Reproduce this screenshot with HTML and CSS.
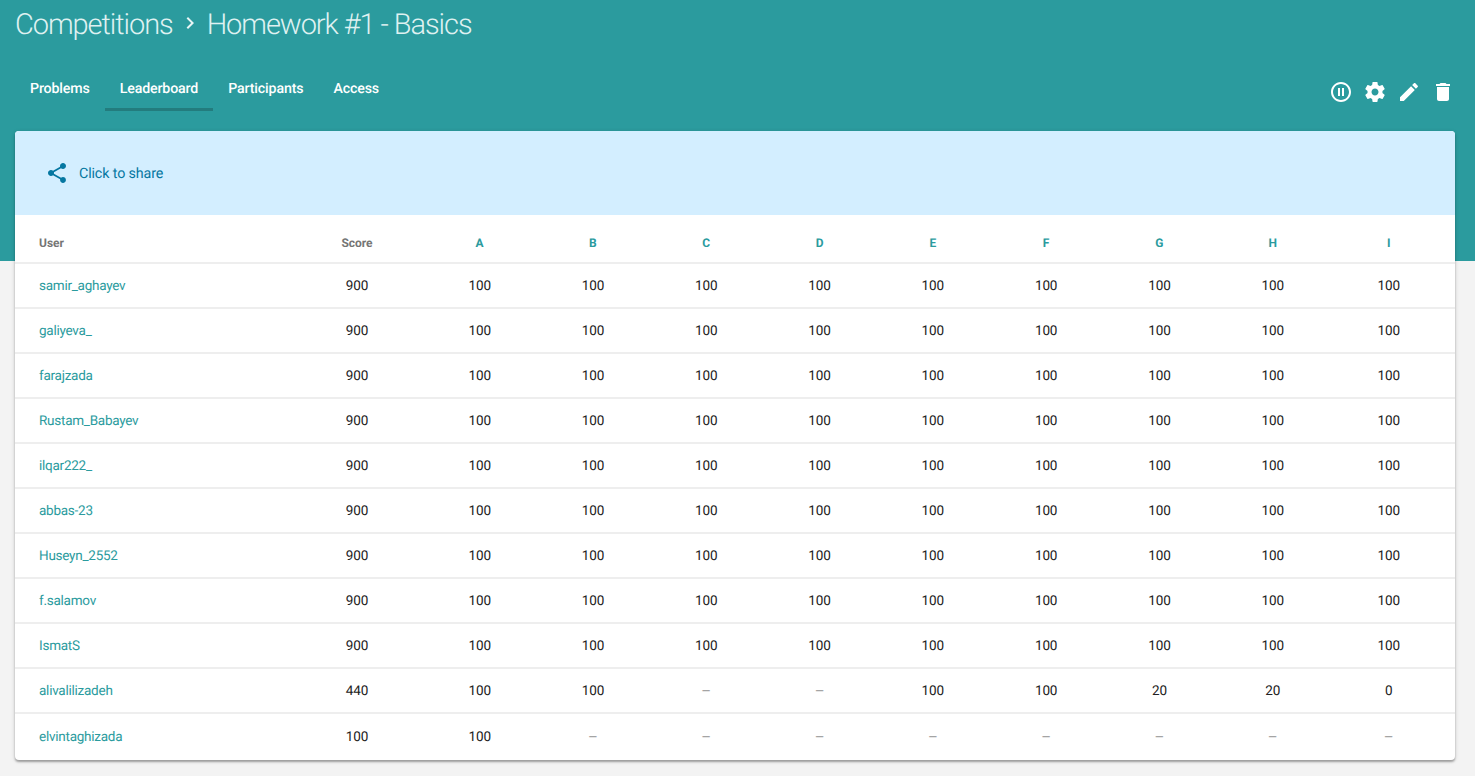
FILE: index.html
```html
<!DOCTYPE html>
<html lang="en">
<head>
<meta charset="utf-8">
<title>Homework #1 - Basics</title>
<link rel="stylesheet" href="styles.css">
</head>
<body>
<header class="page-head">
  <h1 class="crumbs">
    <a class="crumb" href="#">Competitions</a>
    <svg class="chevron" viewBox="0 0 24 24"><path d="M8.59 16.59 13.17 12 8.59 7.41 10 6l6 6-6 6z"/></svg>
    <span class="crumb current">Homework #1 - Basics</span>
  </h1>
  <div class="toolbar">
    <nav class="tabs">
      <a class="tab" href="#">Problems</a>
      <a class="tab active" href="#">Leaderboard</a>
      <a class="tab" href="#">Participants</a>
      <a class="tab" href="#">Access</a>
    </nav>
    <div class="actions">
      <svg viewBox="0 0 24 24"><path d="M9 16h2V8H9v8zm3-14C6.480 2 2 6.480 2 12s4.480 10 10 10 10-4.480 10-10S17.520 2 12 2zm0 18c-4.410 0-8-3.590-8-8s3.590-8 8-8 8 3.590 8 8-3.590 8-8 8zm1-4h2V8h-2v8z"/></svg>
      <svg viewBox="0 0 24 24"><path d="M19.430 12.980c.04-.32.07-.64.07-.98s-.03-.66-.07-.98l2.110-1.650c.19-.15.24-.42.12-.64l-2-3.460c-.12-.22-.39-.3-.61-.22l-2.490 1c-.52-.4-1.080-.73-1.690-.98l-.38-2.650C14.460 2.180 14.250 2 14 2h-4c-.25 0-.46.18-.49.42l-.38 2.650c-.61.25-1.170.59-1.690.98l-2.490-1c-.23-.09-.49 0-.61.22l-2 3.460c-.13.22-.07.49.12.64l2.110 1.650c-.04.32-.07.65-.07.98s.03.66.07.98l-2.110 1.650c-.19.15-.24.42-.12.64l2 3.460c.12.22.39.3.61.22l2.490-1c.52.4 1.080.73 1.690.98l.38 2.650c.03.24.24.42.49.42h4c.25 0 .46-.18.49-.42l.38-2.650c.61-.25 1.170-.59 1.690-.98l2.490 1c.23.09.49 0 .61-.22l2-3.460c.12-.22.07-.49-.12-.64l-2.110-1.650zM12 15.500c-1.930 0-3.500-1.570-3.500-3.500s1.570-3.500 3.500-3.500 3.500 1.570 3.500 3.500-1.570 3.500-3.500 3.500z"/></svg>
      <svg viewBox="0 0 24 24"><path d="M3 17.250V21h3.750L17.810 9.940l-3.750-3.750L3 17.250zM20.710 7.040c.39-.39.39-1.020 0-1.410l-2.340-2.340c-.39-.39-1.020-.39-1.410 0l-1.830 1.830 3.750 3.750 1.830-1.830z"/></svg>
      <svg viewBox="0 0 24 24"><path d="M6 19c0 1.100.9 2 2 2h8c1.100 0 2-.9 2-2V7H6v12zM19 4h-3.500l-1-1h-5l-1 1H5v2h14V4z"/></svg>
    </div>
  </div>
</header>
<main class="card">
  <a class="share" href="#">
    <svg viewBox="0 0 24 24"><path d="M18 16.080c-.76 0-1.440.3-1.960.77L8.910 12.700c.05-.23.09-.46.09-.7s-.04-.47-.09-.7l7.050-4.110c.54.5 1.250.81 2.040.81 1.660 0 3-1.340 3-3s-1.340-3-3-3-3 1.340-3 3c0 .24.04.47.09.7L8.040 9.810C7.500 9.310 6.790 9 6 9c-1.660 0-3 1.340-3 3s1.340 3 3 3c.79 0 1.500-.31 2.040-.81l7.120 4.160c-.05.21-.08.43-.08.65 0 1.610 1.310 2.920 2.920 2.920s2.920-1.310 2.920-2.920-1.310-2.920-2.920-2.920z"/></svg>
    <span>Click to share</span>
  </a>
  <table class="board">
    <colgroup><col class="c-user"><col class="c-score"><col class="c-task" span="8"><col class="c-last"></colgroup>
    <thead>
      <tr><th>User</th><th>Score</th><th><a href="#">A</a></th><th><a href="#">B</a></th><th><a href="#">C</a></th><th><a href="#">D</a></th><th><a href="#">E</a></th><th><a href="#">F</a></th><th><a href="#">G</a></th><th><a href="#">H</a></th><th><a href="#">I</a></th></tr>
    </thead>
    <tbody>
      <tr><td><a href="#">samir_aghayev</a></td><td>900</td><td>100</td><td>100</td><td>100</td><td>100</td><td>100</td><td>100</td><td>100</td><td>100</td><td>100</td></tr>
      <tr><td><a href="#">galiyeva_</a></td><td>900</td><td>100</td><td>100</td><td>100</td><td>100</td><td>100</td><td>100</td><td>100</td><td>100</td><td>100</td></tr>
      <tr><td><a href="#">farajzada</a></td><td>900</td><td>100</td><td>100</td><td>100</td><td>100</td><td>100</td><td>100</td><td>100</td><td>100</td><td>100</td></tr>
      <tr><td><a href="#">Rustam_Babayev</a></td><td>900</td><td>100</td><td>100</td><td>100</td><td>100</td><td>100</td><td>100</td><td>100</td><td>100</td><td>100</td></tr>
      <tr><td><a href="#">ilqar222_</a></td><td>900</td><td>100</td><td>100</td><td>100</td><td>100</td><td>100</td><td>100</td><td>100</td><td>100</td><td>100</td></tr>
      <tr><td><a href="#">abbas-23</a></td><td>900</td><td>100</td><td>100</td><td>100</td><td>100</td><td>100</td><td>100</td><td>100</td><td>100</td><td>100</td></tr>
      <tr><td><a href="#">Huseyn_2552</a></td><td>900</td><td>100</td><td>100</td><td>100</td><td>100</td><td>100</td><td>100</td><td>100</td><td>100</td><td>100</td></tr>
      <tr><td><a href="#">f.salamov</a></td><td>900</td><td>100</td><td>100</td><td>100</td><td>100</td><td>100</td><td>100</td><td>100</td><td>100</td><td>100</td></tr>
      <tr><td><a href="#">IsmatS</a></td><td>900</td><td>100</td><td>100</td><td>100</td><td>100</td><td>100</td><td>100</td><td>100</td><td>100</td><td>100</td></tr>
      <tr><td><a href="#">alivalilizadeh</a></td><td>440</td><td>100</td><td>100</td><td class="none">–</td><td class="none">–</td><td>100</td><td>100</td><td>20</td><td>20</td><td>0</td></tr>
      <tr><td><a href="#">elvintaghizada</a></td><td>100</td><td>100</td><td class="none">–</td><td class="none">–</td><td class="none">–</td><td class="none">–</td><td class="none">–</td><td class="none">–</td><td class="none">–</td><td class="none">–</td></tr>
    </tbody>
  </table>
</main>
</body>
</html>
```

FILE: styles.css
```css
* { box-sizing: border-box; }
body {
  margin: 0;
  height: 776px;
  overflow: hidden;
  background: #f3f3f3;
  font-family: Roboto, "Liberation Sans", sans-serif;
  color: #212121;
  text-rendering: geometricPrecision;
}
a { color: inherit; text-decoration: none; }
svg { fill: currentColor; display: block; flex: none; }
.page-head {
  height: 261px;
  background: #2b9b9e;
  color: #fff;
}
.crumbs {
  display: flex;
  align-items: center;
  height: 50px;
  margin: 0;
  padding-left: 15px;
  font-size: 29px;
  font-weight: 300;
  white-space: nowrap;
}
.crumb { color: #dff1f1; letter-spacing: -1.07px; }
.chevron { width: 24px; height: 24px; margin: -5px 5px 0 5px; color: #e8f5f5; }
.toolbar {
  display: flex;
  justify-content: space-between;
  margin-top: 15px;
  padding: 0 20px 0 15px;
}
.tabs { display: flex; }
.tab {
  height: 46px;
  padding: 0 15px;
  border-bottom: 3px solid transparent;
  font-size: 14.2px;
  font-weight: 500;
  letter-spacing: -0.14px;
  line-height: 48px;
}
.tab.active { border-color: #237c7e; }
.actions { display: flex; gap: 10px; padding-top: 14.5px; }
.actions svg { width: 24px; height: 24px; }
.card {
  width: 1440px;
  height: 629px;
  margin: -130px 0 0 15px;
  overflow: hidden;
  position: relative;
  background: #fff;
  border-radius: 4px;
  box-shadow: 0 2px 2px rgba(0,0,0,.28), 0 1px 4px rgba(0,0,0,.16);
}
.share {
  display: flex;
  align-items: center;
  gap: 10px;
  height: 84px;
  padding-left: 30px;
  background: #d3eeff;
  color: #0577a1;
  font-size: 14.3px;
  letter-spacing: -0.13px;
}
.share svg { width: 24px; height: 24px; }
.share span { padding-top: 1px; }
.board { width: 1440px; table-layout: fixed; border-collapse: separate; border-spacing: 0; }
.c-user { width: 276px; }
.c-score { width: 132px; }
.c-task { width: 113.300px; }
.board th, .board td {
  padding: 0;
  height: 45px;
  border-bottom: 2px solid #eee;
  font-size: 13.500px;
  line-height: 16px;
  letter-spacing: -0.1px;
  text-align: center;
}
.board td a { letter-spacing: -0.25px; }
.board th { height: 49px; padding-top: 9px; font-size: 12px; font-weight: 700; color: #757575; letter-spacing: 0; }
.board th:first-child, .board td:first-child { padding-left: 24px; text-align: left; }
.board th:last-child, .board td:last-child { padding-right: 7px; }
.board a { color: #2b9b9e; }
.board .none { color: #9e9e9e; font-size: 15px; }
.board tbody tr:last-child td { height: 46px; padding-bottom: 1px; border-bottom: 0; }
```
